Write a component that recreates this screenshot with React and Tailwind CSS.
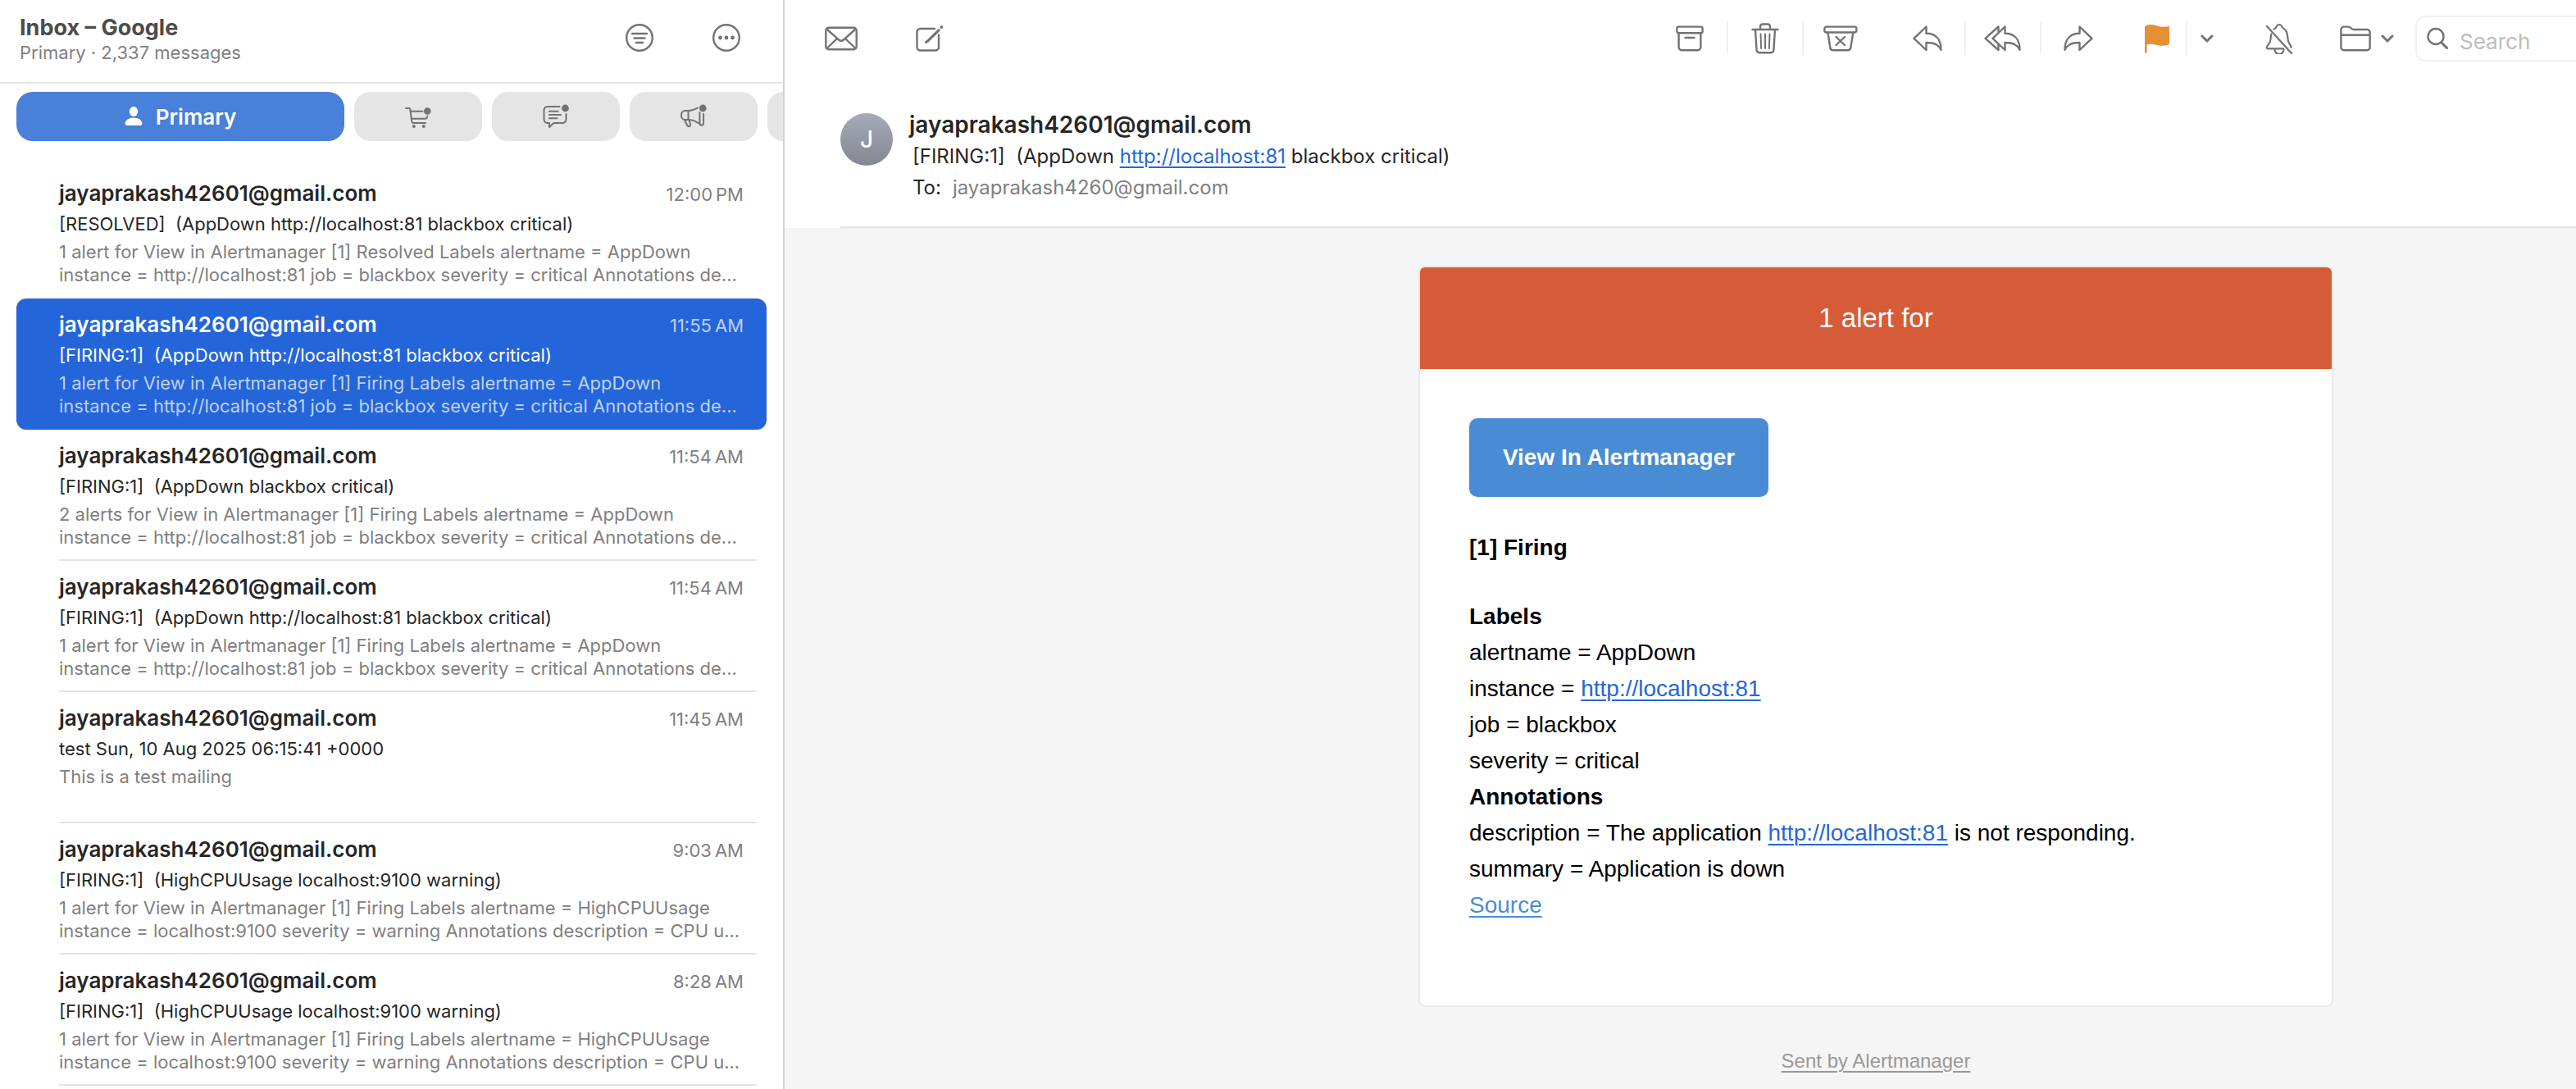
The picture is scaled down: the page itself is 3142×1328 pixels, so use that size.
import React from "react";

const PREVIEW_81 =
  "instance = http://localhost:81 job = blackbox severity = critical Annotations de...";
const PREVIEW_CPU =
  "instance = localhost:9100 severity = warning Annotations description = CPU u...";

const MESSAGES = [
  {
    time: "12:00\u202fPM",
    subject: "[RESOLVED]  (AppDown http://localhost:81 blackbox critical)",
    preview: ["1 alert for View in Alertmanager [1] Resolved Labels alertname = AppDown", PREVIEW_81],
    divider: false,
  },
  {
    time: "11:55\u202fAM",
    subject: "[FIRING:1]  (AppDown http://localhost:81 blackbox critical)",
    preview: ["1 alert for View in Alertmanager [1] Firing Labels alertname = AppDown", PREVIEW_81],
    selected: true,
    divider: false,
  },
  {
    time: "11:54\u202fAM",
    subject: "[FIRING:1]  (AppDown blackbox critical)",
    preview: ["2 alerts for View in Alertmanager [1] Firing Labels alertname = AppDown", PREVIEW_81],
    divider: true,
  },
  {
    time: "11:54\u202fAM",
    subject: "[FIRING:1]  (AppDown http://localhost:81 blackbox critical)",
    preview: ["1 alert for View in Alertmanager [1] Firing Labels alertname = AppDown", PREVIEW_81],
    divider: true,
  },
  {
    time: "11:45\u202fAM",
    subject: "test Sun, 10 Aug 2025 06:15:41 +0000",
    preview: ["This is a test mailing"],
    divider: true,
  },
  {
    time: "9:03\u202fAM",
    subject: "[FIRING:1]  (HighCPUUsage localhost:9100 warning)",
    preview: ["1 alert for View in Alertmanager [1] Firing Labels alertname = HighCPUUsage", PREVIEW_CPU],
    divider: true,
  },
  {
    time: "8:28\u202fAM",
    subject: "[FIRING:1]  (HighCPUUsage localhost:9100 warning)",
    preview: ["1 alert for View in Alertmanager [1] Firing Labels alertname = HighCPUUsage", PREVIEW_CPU],
    divider: true,
  },
];

function Icon({ w, h, sw = 2.4, children }) {
  return (
    <svg
      width={w}
      height={h}
      viewBox={`0 0 ${w} ${h}`}
      fill="none"
      stroke="currentColor"
      strokeWidth={sw}
      strokeLinecap="round"
      strokeLinejoin="round"
      aria-hidden="true"
      className="shrink-0"
    >
      {children}
    </svg>
  );
}

const FilterIcon = () => (
  <Icon w={36} h={36}>
    <circle cx="18" cy="18" r="15.8" />
    <path d="M9 13h18M11.5 18.5h13M14 24h8" />
  </Icon>
);

const MoreIcon = () => (
  <Icon w={36} h={36}>
    <circle cx="18" cy="18" r="15.8" />
    <g fill="currentColor" stroke="none">
      <circle cx="10.5" cy="18" r="2.4" />
      <circle cx="18" cy="18" r="2.4" />
      <circle cx="25.5" cy="18" r="2.4" />
    </g>
  </Icon>
);

const PersonIcon = () => (
  <Icon w={22} h={24}>
    <g fill="currentColor" stroke="none">
      <ellipse cx="11" cy="6" rx="5.2" ry="5.9" />
      <path d="M.6 20.6c0-4 4.400-7.200 10.400-7.200s10.400 3.200 10.400 7.200c0 1.700-.8 2.400-2.600 2.400H3.200c-1.800 0-2.600-.7-2.600-2.400z" />
    </g>
  </Icon>
);

const CartIcon = () => (
  <Icon w={34} h={28} sw={2}>
    <path d="M2 4h4.200a1 1 0 0 1 1 .9l2 14.900a2.600 2.600 0 0 0 2.400 2.200H26" />
    <path d="M8.300 7.800H22.500M9.300 16.700H25.800a2 2 0 0 0 2-1.500l.5-1.700" />
    <g fill="currentColor" stroke="none">
      <circle cx="11.800" cy="26" r="2" />
      <circle cx="23.800" cy="26" r="2" />
      <circle cx="28.300" cy="7.500" r="4.300" />
    </g>
  </Icon>
);

const ChatIcon = () => (
  <Icon w={34} h={30} sw={2}>
    <path d="M21.500 3H7a4.500 4.500 0 0 0-4.500 4.500v11A4.500 4.500 0 0 0 7 23h2v5l5.500-5H25a4.500 4.500 0 0 0 4.500-4.500V12" />
    <path d="M9 8.800h10.500M9 13h14M9 17.200h9.500" />
    <circle cx="28.500" cy="5" r="4.400" fill="currentColor" stroke="none" />
  </Icon>
);

const MegaphoneIcon = () => (
  <Icon w={34} h={30} sw={2}>
    <path d="M22 4.500c-4 2.500-7.500 3.500-11.500 3.500H6.500C3.800 8 2 10.500 2 13.500S3.800 19 6.500 19h4c4.500 0 9 1.500 13 4.500M10.500 8v11" />
    <path d="M24.500 10v13.500a2.300 2.300 0 0 0 4.600 0V12" />
    <path d="M6 19.300l3.200 6.700c1.300 2.200 4.300 1 3.900-1.300L11.500 19.500" />
    <circle cx="28.300" cy="5" r="4.400" fill="currentColor" stroke="none" />
  </Icon>
);

const EnvelopeIcon = () => (
  <Icon w={40} h={30}>
    <rect x="1.300" y="1.800" width="37.400" height="26.400" rx="3.500" />
    <path d="M2.500 3.500L17 16.500a4.600 4.600 0 0 0 6 0L37.500 3.500M2.500 27L14.500 15.500M37.500 27L25.500 15.500" />
  </Icon>
);

const ComposeIcon = () => (
  <Icon w={34} h={34}>
    <path d="M23 5H5.500A4 4 0 0 0 1.500 9v18.500a4 4 0 0 0 4 4H24a4 4 0 0 0 4-4V12.500" />
    <path d="M28 6.800L14.500 20.200M14.500 20.200l-2 1.300" strokeWidth="3.200" />
    <path d="M31.300 3.200l.2-.2" strokeWidth="3.600" />
  </Icon>
);

const ArchiveIcon = () => (
  <Icon w={34} h={32}>
    <rect x="1.400" y="1.600" width="31.200" height="7.600" rx="2" />
    <path d="M3.600 9.300v17a4 4 0 0 0 4 4h18.800a4 4 0 0 0 4-4v-17M11.500 15h11" />
  </Icon>
);

const TrashIcon = () => (
  <Icon w={34} h={38}>
    <path d="M1.500 8h31M11 8V4.200A2.700 2.700 0 0 1 13.700 1.500h6.600A2.700 2.700 0 0 1 23 4.200V8M5 8l1.600 25a3.400 3.400 0 0 0 3.400 3.200h14a3.400 3.400 0 0 0 3.400-3.200L29 8" />
    <path d="M11.500 13.500l.6 17.500M17 13.500V31M22.500 13.500l-.6 17.500" strokeWidth="2" />
  </Icon>
);

const JunkIcon = () => (
  <Icon w={42} h={32}>
    <rect x="1.400" y="1.600" width="39" height="6.900" rx="2.200" />
    <path d="M5.500 8.700l2.800 18.300a3.600 3.600 0 0 0 3.600 3.200h17.800a3.600 3.600 0 0 0 3.600-3.200L36.300 8.700" />
    <path d="M15.500 14l10.500 10M26 14L15.500 24" />
  </Icon>
);

const ReplyShape = "M16.500 1.500v8.300C27.500 9.800 34.500 16.500 34.500 29.700 31.500 24 27.500 21 16.500 21v9L1.500 15.800z";

const ReplyIcon = () => (
  <Icon w={36} h={32}>
    <path d={ReplyShape} />
  </Icon>
);

const ForwardIcon = () => (
  <Icon w={36} h={32}>
    <path d={ReplyShape} transform="matrix(-1 0 0 1 36 0)" />
  </Icon>
);

const ReplyAllIcon = () => (
  <Icon w={46} h={32}>
    <path d={ReplyShape} transform="translate(9 0)" />
    <path d="M17.500 7.500v-6l-16 14.300 16 14.200v-6" />
  </Icon>
);

const FlagIcon = () => (
  <Icon w={30} h={36}>
    <path
      d="M0 3.500C4 .3 9 .6 15 2.400c5 1.400 9 1.900 13 .8 1-.3 2 .1 2 1.200V23c0 1.500-.5 2.200-2 2.700-4 1.500-8 1.300-13 .2-5-1.200-9-1.700-12.400-.7V34.500a1.300 1.300 0 0 1-2.600 0z"
      fill="#e69036"
      stroke="none"
    />
  </Icon>
);

const ChevronIcon = () => (
  <Icon w={16} h={10} sw={3}>
    <path d="M2 2l6 6 6-6" />
  </Icon>
);

const BellOffIcon = () => (
  <Icon w={34} h={38} sw={2.2}>
    <path d="M2 4l30 33" />
    <path d="M10.500 7.500c1.300-.6 2.500-1.300 3-2.700C14.200 3 15.300 2 17 2s2.900 1 3.500 2.800c.7 1.800 2.800 2.300 4.300 4.200 2.200 2.800 2.400 6 2.700 10.500.2 3 1.200 5 3 7.200.7.900 1.200 1.800 1 3" />
    <path d="M7.200 13.500c-.4 2-.5 4-.7 6.500-.2 3-1.200 5-3.200 7-1.600 1.700-2.400 4.300.2 4.300H22M11.500 32.500a5.500 5.500 0 0 0 11 0" />
  </Icon>
);

const FolderIcon = () => (
  <Icon w={38} h={32}>
    <path d="M1.400 26.800V5A3.500 3.500 0 0 1 4.900 1.600h5.300c1.200 0 2 .4 2.800 1.200l1.200 1.100c.8.700 1.500 1.100 2.700 1.100h16.200a3.500 3.500 0 0 1 3.500 3.500v18.300a3.500 3.500 0 0 1-3.500 3.500H4.900a3.500 3.500 0 0 1-3.500-3.500zM1.400 11.800h35.200" />
  </Icon>
);

const SearchIcon = () => (
  <Icon w={26} h={28}>
    <circle cx="11" cy="11.500" r="9.500" />
    <path d="M18 19l6.500 6.500" strokeWidth="3" />
  </Icon>
);

function ToolButton({ label, className, children }) {
  return (
    <button type="button" aria-label={label} className={`flex h-14 items-center justify-center ${className}`}>
      {children}
    </button>
  );
}

const Separator = () => <div className="h-10 w-0.5 bg-[#f0f0f0]" />;

function MessageRow({ message }) {
  const { time, subject, preview, selected, divider } = message;
  return (
    <li>
      <button
        type="button"
        className={`flex w-full rounded-xl pr-3 pl-[52px] text-left ${selected ? "bg-[#2565da]" : ""}`}
      >
        <span
          className={`flex min-h-40 min-w-0 flex-1 flex-col border-b-2 pt-3.5 pr-4 ${
            divider ? "border-[#e4e4e4]" : "border-transparent"
          }`}
        >
          <span className="flex items-baseline justify-between leading-9">
            <span className={`text-[26px] font-semibold ${selected ? "text-white" : "text-[#262626]"}`}>
              jayaprakash42601@gmail.com
            </span>
            <span className={`text-[22px] ${selected ? "text-[#bed1f4]" : "text-[#808080]"}`}>{time}</span>
          </span>
          <span
            className={`text-[22px] leading-9 font-normal whitespace-pre ${selected ? "text-white" : "text-[#262626]"}`}
          >
            {subject}
          </span>
          <span
            className={`mt-0.5 flex flex-col text-[22px] leading-7 whitespace-nowrap ${
              selected ? "text-[#bed1f4]" : "text-[#808080]"
            }`}
          >
            {preview.map((line) => (
              <span key={line}>{line}</span>
            ))}
          </span>
        </span>
      </button>
    </li>
  );
}

function Sidebar() {
  return (
    <aside className="w-[957px] shrink-0 overflow-hidden border-r-2 border-[#d2d2d2] bg-white">
      <header className="flex items-start justify-between border-b-2 border-[#e5e5e5] pt-[18px] pr-10 pb-[22px] pl-6">
        <div>
          <h1 className="text-[27px] leading-8 font-bold text-[#4c4c4c]">Inbox – Google</h1>
          <p className="text-[22px] leading-7 text-[#808080]">Primary · 2,337 messages</p>
        </div>
        <div className="flex gap-12 text-[#737373]">
          <ToolButton label="Filter" className="w-[58px]">
            <FilterIcon />
          </ToolButton>
          <ToolButton label="More" className="w-[58px]">
            <MoreIcon />
          </ToolButton>
        </div>
      </header>

      <nav aria-label="Categories" className="flex gap-3 pt-2.5 pl-5 text-[#737373]">
        <button
          type="button"
          className="flex h-15 w-[400px] shrink-0 items-center justify-center gap-4 rounded-[20px] bg-[#4980da] text-[26px] font-semibold text-white"
        >
          <PersonIcon />
          Primary
        </button>
        <ToolButton label="Transactions" className="h-15! w-39 shrink-0 rounded-[20px] bg-[#e5e5e5]">
          <CartIcon />
        </ToolButton>
        <ToolButton label="Updates" className="h-15! w-39 shrink-0 rounded-[20px] bg-[#e5e5e5]">
          <ChatIcon />
        </ToolButton>
        <ToolButton label="Promotions" className="h-15! w-39 shrink-0 rounded-[20px] bg-[#e5e5e5]">
          <MegaphoneIcon />
        </ToolButton>
        <ToolButton label="All mail" className="h-15! w-39 shrink-0 rounded-[20px] bg-[#e5e5e5]" />
      </nav>

      <ul className="px-5 pt-8">
        {MESSAGES.map((message, i) => (
          <MessageRow key={i} message={message} />
        ))}
      </ul>
    </aside>
  );
}

function Toolbar() {
  return (
    <div className="flex h-[94px] items-center justify-between pl-6 text-[#737373]">
      <div className="flex gap-[18px]">
        <ToolButton label="Mark as unread" className="w-[90px]">
          <EnvelopeIcon />
        </ToolButton>
        <ToolButton label="New message" className="w-[90px]">
          <ComposeIcon />
        </ToolButton>
      </div>
      <div className="flex items-center gap-4">
        <div className="flex items-center">
          <ToolButton label="Archive" className="w-[90px]">
            <ArchiveIcon />
          </ToolButton>
          <Separator />
          <ToolButton label="Delete" className="w-[90px]">
            <TrashIcon />
          </ToolButton>
          <Separator />
          <ToolButton label="Junk" className="w-[90px]">
            <JunkIcon />
          </ToolButton>
        </div>
        <div className="flex items-center">
          <ToolButton label="Reply" className="w-[90px]">
            <ReplyIcon />
          </ToolButton>
          <Separator />
          <ToolButton label="Reply all" className="w-[90px]">
            <ReplyAllIcon />
          </ToolButton>
          <Separator />
          <ToolButton label="Forward" className="w-[90px]">
            <ForwardIcon />
          </ToolButton>
        </div>
        <div className="flex items-center">
          <ToolButton label="Flag" className="w-[70px]">
            <FlagIcon />
          </ToolButton>
          <Separator />
          <ToolButton label="Flag colours" className="w-12">
            <ChevronIcon />
          </ToolButton>
        </div>
        <ToolButton label="Mute" className="w-24">
          <BellOffIcon />
        </ToolButton>
        <ToolButton label="Move to folder" className="w-[86px] gap-3">
          <FolderIcon />
          <ChevronIcon />
        </ToolButton>
        <label className="flex h-14 w-49 items-center gap-3.5 rounded-l-xl border-2 border-r-0 border-[#f0f0f0] pl-3">
          <SearchIcon />
          <input
            type="search"
            aria-label="Search"
            placeholder="Search"
            className="w-full min-w-0 bg-transparent pt-1.5 text-[26px] outline-none placeholder:text-[#bcbcbc]"
          />
        </label>
      </div>
    </div>
  );
}

function LocalLink() {
  return (
    <a href="#localhost" className="text-[#2467da] underline decoration-2 underline-offset-4">
      http://localhost:81
    </a>
  );
}

function MessageHeader() {
  return (
    <div className="ml-17 flex gap-5 border-b-2 border-[#e4e4e4] pt-10 pb-7">
      <div className="mt-1 flex size-16 items-center justify-center rounded-full bg-linear-to-b from-[#a6abb9] to-[#838791] text-[28px] font-medium text-white">
        J
      </div>
      <div>
        <h2 className="text-[28px] leading-9 font-semibold text-[#262626]">jayaprakash42601@gmail.com</h2>
        <div className="mt-0.5 pl-1 text-2xl leading-[38px] text-[#262626]">
          <p className="whitespace-pre">
            {"[FIRING:1]  (AppDown "}
            <LocalLink />
            {" blackbox critical)"}
          </p>
          <p className="flex gap-3.5">
            <span>To:</span>
            <span className="text-[#808080]">jayaprakash4260@gmail.com</span>
          </p>
        </div>
      </div>
    </div>
  );
}

function MailBody() {
  return (
    <div className="flex flex-1 justify-end bg-[#f5f5f5] pt-[46px] pr-[296px] font-['Liberation_Sans',Arial,sans-serif]">
      <div className="w-[1116px]">
        <article className="overflow-hidden rounded-lg border-2 border-[#e9e9e9] bg-white">
          <h3 className="bg-[#d65c39] py-10 text-center text-[33px] leading-11 text-white">1 alert for</h3>
          <div className="px-15 pt-15 pb-25 text-[28px] leading-11 text-black">
            <a
              href="#alertmanager"
              className="inline-flex h-24 min-w-[365px] items-center justify-center rounded-[10px] bg-[#4a8cd4] px-10 align-top font-bold text-white"
            >
              View In Alertmanager
            </a>
            <p className="mt-10 font-bold">[1] Firing</p>
            <p className="mt-10 font-bold">Labels</p>
            <p>alertname = AppDown</p>
            <p>
              instance = <LocalLink />
            </p>
            <p>job = blackbox</p>
            <p>severity = critical</p>
            <p className="font-bold">Annotations</p>
            <p>
              description = The application <LocalLink /> is not responding.
            </p>
            <p>summary = Application is down</p>
            <p>
              <a href="#source" className="text-[#4a8cd4] underline decoration-2 underline-offset-4">
                Source
              </a>
            </p>
          </div>
        </article>
        <footer className="mt-12 text-center text-2xl leading-9">
          <a href="#sent-by" className="text-[#999999] underline decoration-2 underline-offset-4">
            Sent by Alertmanager
          </a>
        </footer>
      </div>
    </div>
  );
}

export default function App() {
  return (
    <div className="flex min-h-screen bg-white font-['Inter',sans-serif]">
      <Sidebar />
      <main className="flex min-w-0 flex-1 flex-col">
        <Toolbar />
        <MessageHeader />
        <MailBody />
      </main>
    </div>
  );
}
